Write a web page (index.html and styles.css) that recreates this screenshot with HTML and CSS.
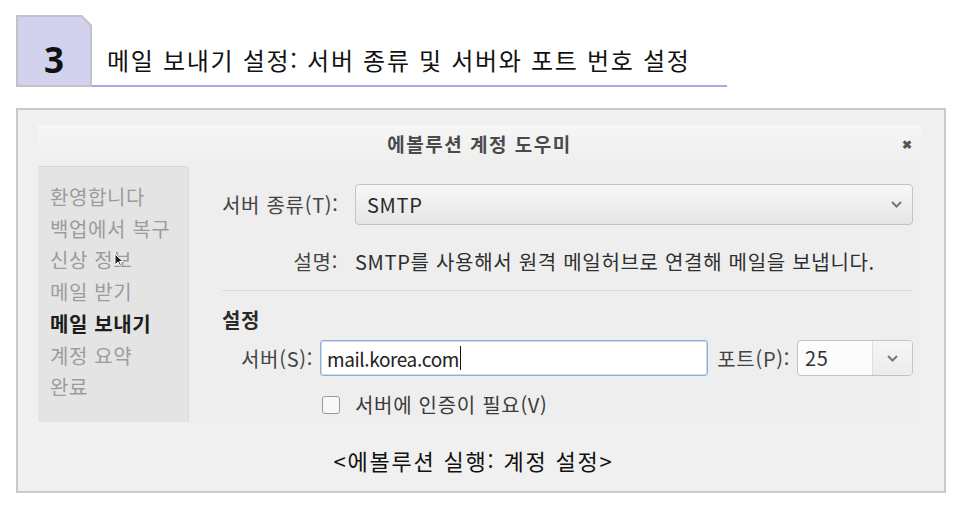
FILE: index.html
```html
<!DOCTYPE html>
<html lang="ko">
<head>
    <meta charset="UTF-8">
    <title>메일 보내기 설정</title>
    <link rel="stylesheet" href="styles.css">
</head>
<body>
    <div class="page">
        <div class="section-head">
            <div class="badge"><span class="badge-inner">3</span></div>
            <h1 class="section-title">메일 보내기 설정: 서버 종류 및 서버와 포트 번호 설정</h1>
        </div>

        <div class="figure">
            <div class="dialog">
                <div class="titlebar">
                    <span></span>
                    <span class="dialog-title">에볼루션 계정 도우미</span>
                    <span class="close">&#x2716;</span>
                </div>
                <div class="dialog-body">
                    <ul class="steps">
                        <li>환영합니다</li>
                        <li>백업에서 복구</li>
                        <li>신상 정보</li>
                        <li>메일 받기</li>
                        <li class="current">메일 보내기</li>
                        <li>계정 요약</li>
                        <li>완료</li>
                        <svg class="cursor" width="10" height="14" viewBox="0 0 10 14">
                            <path d="M1 1 L1 12 L4 9 L6 13 L7.5 12.3 L5.6 8.5 L9 8.5 Z" fill="#222" stroke="#fff" stroke-width="1"/>
                        </svg>
                    </ul>

                    <div class="main">
                        <div class="form-grid">
                            <label class="label">서버 종류(T):</label>
                            <div class="select">
                                <span>SMTP</span>
                                <svg class="chevron" width="11" height="7" viewBox="0 0 11 7"><path d="M1 1 L5.5 5.5 L10 1" fill="none" stroke="#777" stroke-width="2"/></svg>
                            </div>
                            <label class="label desc-label">설명:</label>
                            <div class="desc">SMTP를 사용해서 원격 메일허브로 연결해 메일을 보냅니다.</div>
                        </div>

                        <hr class="sep">

                        <div class="group-title">설정</div>

                        <div class="server-row">
                            <label class="label server-label">서버(S):</label>
                            <div class="input">mail.korea.com<span class="caret"></span></div>
                            <label class="label port-label">포트(P):</label>
                            <div class="combo">
                                <span class="combo-value">25</span>
                                <span class="combo-btn">
                                    <svg width="11" height="7" viewBox="0 0 11 7"><path d="M1 1 L5.5 5.5 L10 1" fill="none" stroke="#777" stroke-width="2"/></svg>
                                </span>
                            </div>
                        </div>

                        <div class="check-row">
                            <span class="checkbox"></span>
                            <span>서버에 인증이 필요(V)</span>
                        </div>
                    </div>
                </div>
            </div>
            <p class="caption">&lt;에볼루션 실행: 계정 설정&gt;</p>
        </div>
    </div>
</body>
</html>
```

FILE: styles.css
```css
* {
    margin: 0;
    padding: 0;
    box-sizing: border-box;
}

body {
    background: #fff;
    font-family: "Noto Sans CJK KR", "Noto Sans", sans-serif;
    color: #111;
}

.page {
    padding: 15px 0 0 16px;
}

/* section heading */
.section-head {
    display: flex;
    align-items: stretch;
    height: 72px;
}

.badge {
    width: 76px;
    height: 72px;
    background: #c2c2c8;
    clip-path: polygon(0 0, calc(100% - 10px) 0, 100% 10px, 100% 100%, 0 100%);
    padding: 2px;
}

.badge-inner {
    display: flex;
    justify-content: center;
    align-items: flex-end;
    height: 100%;
    padding-bottom: 8px;
    background: #d2d2ef;
    clip-path: polygon(0 0, calc(100% - 9px) 0, 100% 9px, 100% 100%, 0 100%);
    font-family: "Noto Sans", sans-serif;
    font-weight: bold;
    font-size: 35px;
    line-height: 1;
    color: #111;
}

.section-title {
    width: 635px;
    border-bottom: 2px solid #a9a9e2;
    padding: 30px 0 0 15px;
    font-size: 24px;
    letter-spacing: 1.7px;
    font-weight: normal;
    line-height: 30px;
    color: #111;
}

/* figure frame */
.figure {
    width: 930px;
    margin-top: 21px;
    border: 2px solid #c9c9c9;
    background: #f0f0f0;
    padding: 15px 23px 0 20px;
}

.dialog {
    width: 883px;
    height: 297px;
    background: #eeeeee;
}

.titlebar {
    display: grid;
    grid-template-columns: 1fr auto 1fr;
    align-items: center;
    height: 41px;
    padding: 0 9px 5px;
    background: linear-gradient(#f6f6f6, #eeeeee);
}

.dialog-title {
    font-size: 19px;
    letter-spacing: 1.5px;
    font-weight: bold;
    color: #4a4a4a;
}

.close {
    justify-self: end;
    font-size: 12px;
    font-weight: bold;
    color: #555;
}

.dialog-body {
    display: flex;
    height: 256px;
}

.steps {
    position: relative;
    list-style: none;
    width: 151px;
    flex: none;
    background: #e4e4e4;
    border-top: 1px solid #d8d8d8;
    border-right: 1px solid #d8d8d8;
    border-radius: 0 3px 0 0;
    padding: 14px 0 0 12px;
    font-size: 20px;
    letter-spacing: 0.6px;
    line-height: 31.7px;
    color: #9c9c9c;
    white-space: nowrap;
}

.steps .current {
    font-weight: bold;
    color: #1c1c1c;
}

.cursor {
    position: absolute;
    left: 76px;
    top: 86px;
}

.main {
    flex: 1;
    padding: 18px 8px 0 33px;
    font-size: 20px;
    letter-spacing: 0.7px;
    color: #333;
}

.label {
    color: #444;
    text-align: right;
    white-space: nowrap;
}

.form-grid {
    display: grid;
    grid-template-columns: 116px 1fr;
    column-gap: 17px;
    align-items: center;
}

.select {
    display: flex;
    justify-content: space-between;
    align-items: center;
    height: 41px;
    padding: 0 10px 0 11px;
    border: 1px solid #c2c2c2;
    border-radius: 4px;
    background: linear-gradient(#f7f7f7, #e5e5e5);
    color: #2a2a2a;
}

.desc-label,
.desc {
    margin-top: 23px;
    line-height: 28px;
}

.desc {
    color: #2e2e2e;
    white-space: nowrap;
}

.sep {
    border: none;
    border-top: 1px solid #dcdcdc;
    margin-top: 14px;
}

.group-title {
    margin-top: 15px;
    font-weight: bold;
    line-height: 28px;
    color: #2a2a2a;
}

.server-row {
    display: flex;
    align-items: center;
    margin-top: 6px;
    height: 36px;
}

.server-label {
    width: 91px;
    margin-right: 7px;
}

.input {
    display: flex;
    align-items: center;
    flex: 1;
    height: 36px;
    padding-left: 6px;
    border: 1px solid #8fb1d4;
    box-shadow: inset 0 0 0 1px #c9dbec;
    border-radius: 3px;
    background: #fff;
    color: #222;
    font-size: 19px;
    letter-spacing: -0.4px;
}

.caret {
    display: inline-block;
    width: 1px;
    height: 24px;
    background: #111;
    margin-left: 1px;
}

.port-label {
    width: 74px;
    margin: 0 7px 0 8px;
}

.combo {
    display: flex;
    width: 116px;
    height: 36px;
    border: 1px solid #c2c2c2;
    border-radius: 4px;
    background: #fcfcfc;
}

.combo-value {
    flex: 1;
    padding-left: 7px;
    line-height: 34px;
    color: #333;
}

.combo-btn {
    display: flex;
    align-items: center;
    justify-content: center;
    width: 40px;
    border-left: 1px solid #dedede;
    background: linear-gradient(#f6f6f6, #ececec);
    border-radius: 0 3px 3px 0;
}

.check-row {
    display: flex;
    align-items: center;
    gap: 15px;
    margin-top: 16px;
    padding-left: 100px;
    line-height: 26px;
    color: #3a3a3a;
}

.checkbox {
    width: 18px;
    height: 18px;
    border: 1px solid #9a9a9a;
    border-radius: 3px;
    background: #f8f8f8;
}

.caption {
    padding: 24px 12px 17px 0;
    text-align: center;
    font-size: 22px;
    letter-spacing: 1.8px;
    line-height: 28px;
    color: #111;
}
```
